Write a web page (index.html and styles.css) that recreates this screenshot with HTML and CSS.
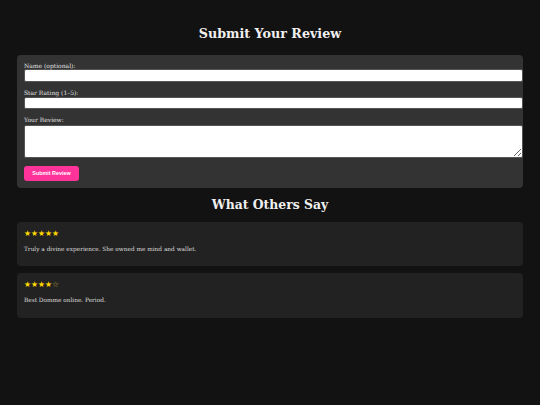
FILE: index.html
```html
<!DOCTYPE html>
<html lang="en">
<head>
<meta charset="utf-8">
<title>Submit Your Review</title>
<link rel="stylesheet" href="styles.css">
</head>
<body>
<main class="page">
  <h2 class="title">Submit Your Review</h2>
  <form class="review-form">
    <label class="field-label" for="name">Name (optional):</label>
    <input class="field" id="name" type="text">
    <label class="field-label" for="rating">Star Rating (1–5):</label>
    <input class="field" id="rating" type="text">
    <label class="field-label" for="review">Your Review:</label>
    <textarea class="field field-area" id="review"></textarea>
    <button class="submit" type="button">Submit Review</button>
  </form>
  <h2 class="title title-others">What Others Say</h2>
  <section class="reviews">
    <article class="review">
      <div class="stars">★★★★★</div>
      <p class="review-text">Truly a divine experience. She owned me mind and wallet.</p>
    </article>
    <article class="review">
      <div class="stars">★★★★<span class="star-empty">☆</span></div>
      <p class="review-text">Best Domme online. Period.</p>
    </article>
  </section>
</main>
</body>
</html>
```

FILE: styles.css
```css
html, body {
  margin: 0;
  padding: 0;
  background: #121212;
  color: #e6e6e6;
  font-family: "DejaVu Serif", Georgia, serif;
}

.page {
  padding: 0 17px;
}

.title {
  margin: 0;
  padding-top: 25px;
  height: 29.5px;
  text-align: center;
  font-size: 12.7px;
  line-height: 18px;
  font-weight: bold;
  color: #f0f0f0;
}

.title-others {
  padding-top: 8.5px;
  height: 25.5px;
  font-size: 12.4px;
  line-height: 18px;
}

.review-form {
  background: #333333;
  border-radius: 4px;
  padding: 7px 0 7px 7px;
}

.field-label {
  display: block;
  font-size: 6px;
  line-height: 7.5px;
  color: #e0e0e0;
}

.field {
  display: block;
  box-sizing: border-box;
  width: 100%;
  height: 12.5px;
  margin: 0 0 7px;
  padding: 2px 3px;
  border: 1px solid #555;
  border-radius: 2px;
  background: #ffffff;
  font-family: inherit;
}

.field + .field-label {
  line-height: 8.4px;
}

.field-area {
  height: 33px;
  margin-bottom: 8px;
  resize: vertical;
}

.submit {
  display: block;
  width: 55px;
  height: 15px;
  padding: 0;
  border: none;
  border-radius: 3px;
  background: #ff3399;
  color: #ffffff;
  font-family: "Liberation Sans", Arial, sans-serif;
  font-weight: bold;
  font-size: 5.4px;
}

.reviews {
  display: flex;
  flex-direction: column;
  gap: 7px;
}

.review {
  background: #222222;
  border-radius: 4px;
  padding: 7px;
  height: 30.5px;
}

.stars {
  color: #ffd700;
  font-size: 7.8px;
  line-height: 9px;
  font-family: "DejaVu Sans", sans-serif;
}

.star-empty {
  color: #b8a040;
}

.review-text {
  margin: 7px 0 0;
  font-size: 5.8px;
  line-height: 9px;
  color: #dddddd;
}
```
